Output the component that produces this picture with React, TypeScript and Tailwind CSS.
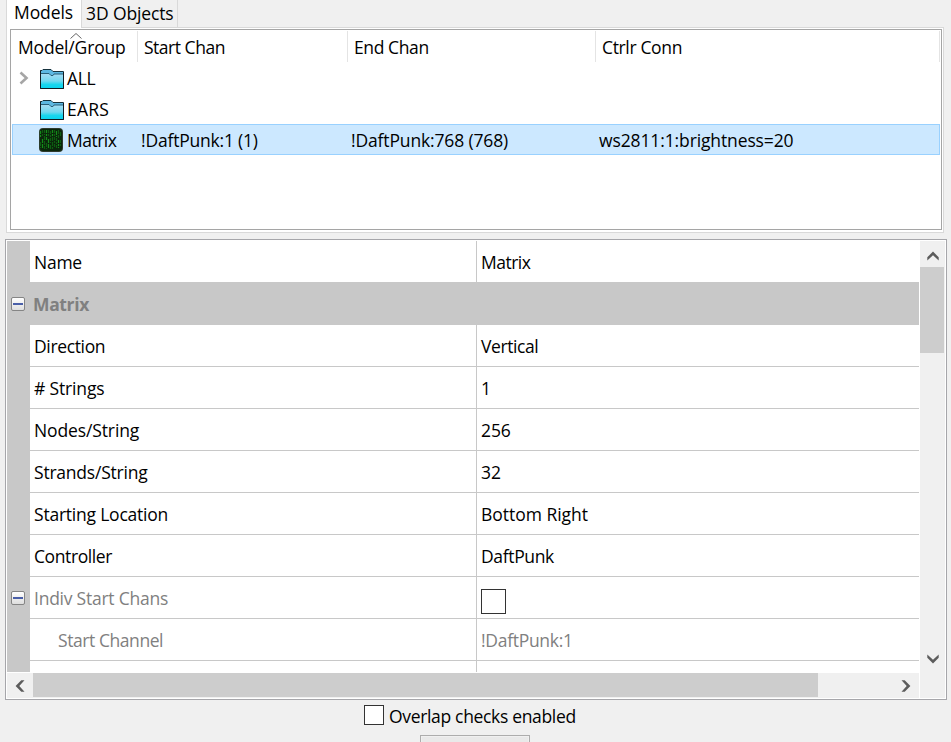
import React from "react";

type Property = { name: string; value: string; disabled?: boolean; child?: boolean; toggle?: boolean; nameTracking: string; valueTracking: string };

const properties: Property[] = [
  { name: "Direction", value: "Vertical", nameTracking: "tracking-[-0.35px]", valueTracking: "tracking-[-0.4px]" },
  { name: "# Strings", value: "1", nameTracking: "tracking-[-0.15px]", valueTracking: "tracking-[-0.2px]" },
  { name: "Nodes/String", value: "256", nameTracking: "tracking-[-0.12px]", valueTracking: "tracking-[-0.1px]" },
  { name: "Strands/String", value: "32", nameTracking: "tracking-[-0.22px]", valueTracking: "tracking-[-0.1px]" },
  { name: "Starting Location", value: "Bottom Right", nameTracking: "tracking-[-0.22px]", valueTracking: "tracking-[-0.02px]" },
  { name: "Controller", value: "DaftPunk", nameTracking: "tracking-[-0.4px]", valueTracking: "tracking-[-0.35px]" },
  { name: "Indiv Start Chans", value: "", disabled: true, toggle: true, nameTracking: "tracking-[-0.24px]", valueTracking: "" },
  { name: "Start Channel", value: "!DaftPunk:1", disabled: true, child: true, nameTracking: "tracking-[-0.43px]", valueTracking: "tracking-[-0.3px]" },
];

function Folder() {
  return (
    <svg width="24" height="21" viewBox="0 0 24 21" className="mt-1 shrink-0" aria-hidden="true">
      <defs>
        <linearGradient id="folder" x1="0" y1="0" x2="0" y2="1">
          <stop offset="0" stopColor="#a5dcf3" />
          <stop offset="0.5" stopColor="#72d8f0" />
          <stop offset="0.75" stopColor="#18d6ee" />
          <stop offset="1" stopColor="#0bd3ee" />
        </linearGradient>
      </defs>
      <path d="M.5 1.500H2l1-1h8l2 2h10.500V19.500H.5z" fill="#5cb8e2" stroke="#17323d" />
      <path d="M1 5h8.500l2 2 2-2H23v14H1z" fill="url(#folder)" />
      <path d="M1 4.500h8l2 2h2l1-1.500h9" fill="none" stroke="#28617a" />
      <path d="M.5 1.500v18h23V3" fill="none" stroke="#101c22" />
    </svg>
  );
}

const streaks = [
  [2, 3, 7], [2, 14, 6], [4, 2, 7], [4, 11, 9], [6, 2, 5], [6, 8, 13], [8, 2, 11], [8, 15, 6],
  [10, 2, 7], [10, 11, 10], [12, 3, 12], [12, 17, 5], [14, 2, 6], [14, 9, 12], [16, 2, 17],
  [18, 3, 6], [18, 10, 11], [20, 2, 8], [20, 12, 8], [22, 4, 5], [22, 12, 7],
];

function MatrixIcon() {
  return (
    <svg width="24" height="24" viewBox="0 0 24 24" className="shrink-0" aria-hidden="true">
      <rect width="24" height="24" rx="4" fill="#2e3a2e" />
      <rect x="1" y="1" width="22" height="22" rx="3" fill="#0a260b" />
      {streaks.map(([x, y, h], i) => (
        <path
          key={i}
          d={`M${x - 0.5} ${y}v${h}`}
          stroke={i % 3 ? "#0e5c12" : "#148a1a"}
          strokeWidth="1.2"
          strokeDasharray={i % 2 ? "4 1" : "3 1 2 1"}
        />
      ))}
    </svg>
  );
}

function Collapse() {
  return (
    <span className="flex h-[14px] w-[14px] items-center justify-center rounded-[2px] border border-[#858585] bg-linear-to-b from-white to-[#dedede]">
      <span className="h-[2px] w-[10px] bg-[#4a5fa8]" />
    </span>
  );
}

function Chevron({ turn }: { turn: string }) {
  return (
    <svg width="12" height="10" viewBox="0 0 12 10" className={turn} aria-hidden="true">
      <path d="M.3 6.300 6 .6l5.700 5.700v3.200L6 4.300 .3 9.500z" fill="#5c5c5c" />
    </svg>
  );
}

function ModelList() {
  return (
    <div className="h-[201px] border border-[#a5a5a5] bg-white p-px">
      <div className="flex h-[31px] items-center">
        <div className="relative flex h-full w-[126px] items-center border-r border-[#e4e4e4] pt-px pl-1.5">
          <svg width="12" height="7" viewBox="0 0 12 7" className="absolute top-[1px] left-[58px]" aria-hidden="true">
            <path d="m.5 6.500 5.500-5 5.500 5" fill="none" stroke="#666" />
          </svg>
          <span className="tracking-[-0.17px]">Model/Group</span>
        </div>
        <div className="flex h-full w-[210px] items-center border-r border-[#e4e4e4] pt-px pl-1.5">
          <span className="tracking-[-0.48px]">Start Chan</span>
        </div>
        <div className="flex h-full w-[248px] items-center border-r border-[#e4e4e4] pt-px pl-1.5">
          <span className="tracking-[-0.4px]">End Chan</span>
        </div>
        <div className="flex h-full w-[344px] items-center border-r border-[#e4e4e4] pt-px pl-1.5">
          <span className="tracking-[-0.35px]">Ctrlr Conn</span>
        </div>
      </div>
      <div className="flex h-[31px] items-center">
        <div className="flex w-7 items-center pl-[7px]">
          <svg width="10" height="14" viewBox="0 0 10 14" aria-hidden="true">
            <path d="m1.500 1.500 6 5.500-6 5.500" fill="none" stroke="#a6a6a6" strokeWidth="2.600" />
          </svg>
        </div>
        <Folder />
        <span className="ml-[3px] tracking-[-0.4px]">ALL</span>
      </div>
      <div className="flex h-[31px] items-center pl-7">
        <Folder />
        <span className="ml-[3px] tracking-[0.2px]">EARS</span>
      </div>
      <div className="flex h-[31px] items-center border border-[#99d1ff] bg-[#cce8ff]">
        <div className="flex w-[128px] items-center pl-[26px]">
          <MatrixIcon />
          <span className="ml-1 tracking-[-0.5px]">Matrix</span>
        </div>
        <span className="w-[210px] tracking-[-0.2px]">!DaftPunk:1 (1)</span>
        <span className="w-[248px] tracking-[-0.15px]">!DaftPunk:768 (768)</span>
        <span className="tracking-[-0.12px]">ws2811:1:brightness=20</span>
      </div>
    </div>
  );
}

function PropertyGrid() {
  return (
    <div className="mt-1.5 ml-[5px] flex h-[461px] w-[942px] shrink-0 border border-[#a6a6aa] bg-white p-px">
      <div className="flex w-[912px] flex-col">
        <div className="h-[431px] overflow-hidden">
          <div className="flex h-[41px]">
            <div className="w-[23px] bg-[#c8c8c8]" />
            <div className="flex w-[447px] items-center border-r border-[#c8c8c8] pt-px pl-1">
              <span className="tracking-[-0.25px]">Name</span>
            </div>
            <div className="flex items-center pt-px pl-1"><span className="tracking-[-0.5px]">Matrix</span></div>
          </div>
          <div className="flex h-[43px] items-center bg-[#c8c8c8]">
            <div className="w-[26px] pl-1"><Collapse /></div>
            <span className="font-bold tracking-[-0.35px] text-[#808080]">Matrix</span>
          </div>
          {properties.map((p) => (
            <div key={p.name} className={`flex h-[42px] ${p.disabled ? "text-[#808080]" : ""}`}>
              <div className="flex w-[23px] items-center bg-[#c8c8c8] pl-1">{p.toggle && <Collapse />}</div>
              <div className={`flex w-[447px] items-center border-r border-b border-[#c8c8c8] pt-px ${p.child ? "pl-7" : "pl-1"}`}>
                <span className={p.nameTracking}>{p.name}</span>
              </div>
              <div className="flex flex-1 items-center border-b border-[#c8c8c8] pt-px pl-1">
                {p.toggle ? <span className="mt-1.5 h-[25px] w-[25px] border border-[#333] bg-white" /> : <span className={p.valueTracking}>{p.value}</span>}
              </div>
            </div>
          ))}
          <div className="flex h-[11px]">
            <div className="w-[23px] bg-[#c8c8c8]" />
            <div className="w-[447px] border-r border-[#c8c8c8]" />
          </div>
        </div>
        <div className="mt-px flex h-[25px] bg-[#f0f0f0]">
          <div className="flex h-[25px] w-[26px] items-center justify-center pr-px"><Chevron turn="-rotate-90" /></div>
          <div className="h-6 w-[785px] bg-[#cdcdcd]" />
          <div className="flex h-[25px] flex-1 items-center justify-end pr-[7px]"><Chevron turn="rotate-90" /></div>
        </div>
      </div>
      <div className="ml-px flex w-[25px] flex-col bg-[#f0f0f0]">
        <div className="flex h-[26px] w-[25px] items-center justify-center pt-[3px]"><Chevron turn="" /></div>
        <div className="h-[86px] w-6 bg-[#cdcdcd]" />
        <div className="flex w-[25px] flex-1 items-end justify-center pb-[34px]"><Chevron turn="rotate-180" /></div>
      </div>
    </div>
  );
}

export default function App() {
  return (
    <div className="flex h-[742px] w-[951px] flex-col overflow-hidden bg-[#f0f0f0] font-['Open_Sans','Noto_Sans',sans-serif] text-[17.5px] leading-6 whitespace-nowrap text-black">
      <div className="ml-1.5 flex h-7 w-[938px] shrink-0">
        <div className="w-[76px] border-x border-[#d9d9d9] bg-white pl-[7px]"><span className="tracking-[-0.1px]">Models</span></div>
        <div className="w-24 border-r border-b border-[#d9d9d9] pt-px pl-1"><span className="tracking-[-0.12px]">3D Objects</span></div>
        <div className="flex-1 border-b border-[#d9d9d9]" />
      </div>
      <div className="ml-1.5 h-[205px] w-[938px] shrink-0 border-x border-b border-[#d9d9d9] bg-white pt-px pr-px pl-[3px]">
        <ModelList />
      </div>
      <PropertyGrid />
      <label className="ml-[364px] flex h-[35px] shrink-0 items-center">
        <span className="mb-[5px] h-5 w-5 border border-[#333] bg-white" />
        <span className="mb-[3px] ml-[5px] tracking-[-0.33px]">Overlap checks enabled</span>
      </label>
      <div className="ml-[420px] h-[30px] w-[110px] shrink-0 border border-[#adadad] bg-[#f0f0f0] p-px">
        <div className="h-full bg-[#e9e9e9]" />
      </div>
    </div>
  );
}
